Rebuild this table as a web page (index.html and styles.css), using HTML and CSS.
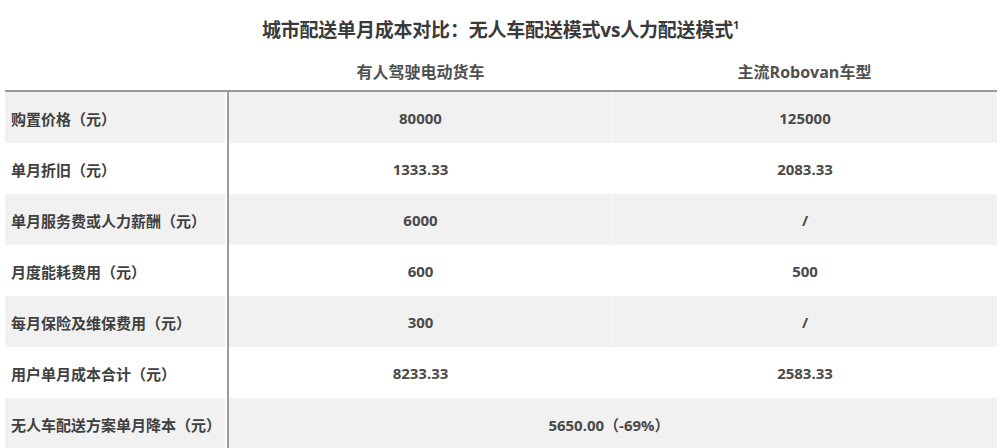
FILE: index.html
```html
<!DOCTYPE html>
<html lang="zh">
<head>
<meta charset="utf-8">
<link rel="stylesheet" href="styles.css">
</head>
<body>
<div class="page">
  <h1 class="title">城市配送单月成本对比：无人车配送模式vs人力配送模式<sup>1</sup></h1>
  <div class="table">
    <div class="head blank"></div>
    <div class="head">有人驾驶电动货车</div>
    <div class="head">主流Robovan车型</div>

    <div class="label g">购置价格（元）</div>
    <div class="cell g c2">80000</div>
    <div class="cell g c3">125000</div>

    <div class="label">单月折旧（元）</div>
    <div class="cell c2">1333.33</div>
    <div class="cell c3">2083.33</div>

    <div class="label g">单月服务费或人力薪酬（元）</div>
    <div class="cell g c2">6000</div>
    <div class="cell g c3">/</div>

    <div class="label">月度能耗费用（元）</div>
    <div class="cell c2">600</div>
    <div class="cell c3">500</div>

    <div class="label g">每月保险及维保费用（元）</div>
    <div class="cell g c2">300</div>
    <div class="cell g c3">/</div>

    <div class="label">用户单月成本合计（元）</div>
    <div class="cell c2">8233.33</div>
    <div class="cell c3">2583.33</div>

    <div class="label g">无人车配送方案单月降本（元）</div>
    <div class="cell g span">5650.00（-69%）</div>
  </div>
</div>
</body>
</html>
```
FILE: styles.css
```css
html, body {
  margin: 0;
  padding: 0;
  background: #ffffff;
}
body {
  font-family: "Open Sans", "Noto Sans CJK SC", sans-serif;
  color: #404040;
  width: 1000px;
  height: 448px;
  overflow: hidden;
}
.page {
  padding: 0 4px 0 5px;
}
.title {
  margin: 0;
  padding-top: 17px;
  height: 33px;
  font-size: 19px;
  line-height: 26px;
  font-weight: 700;
  text-align: center;
  color: #3a3a3a;
  letter-spacing: -0.2px;
}
.title sup {
  font-size: 11px;
  line-height: 0;
  vertical-align: 8px;
}
.table {
  display: grid;
  grid-template-columns: 222px 2px 383px 1px 384px;
  grid-template-rows: 42px repeat(7, 51px);
  width: 992px;
}
.head {
  font-size: 16px;
  font-weight: 700;
  color: #505050;
  text-align: center;
  line-height: 22px;
  padding-top: 11px;
  border-bottom: 2px solid #9a9a9a;
  box-sizing: border-box;
}
.head.blank {
  grid-column: 1 / 3;
}
.head:nth-child(2) {
  grid-column: 3 / 4;
}
.head:nth-child(3) {
  grid-column: 4 / 6;
}
.label {
  grid-column: 1 / 3;
  display: flex;
  align-items: center;
  padding-left: 6px;
  padding-top: 1px;
  font-size: 15px;
  font-weight: 700;
  color: #404040;
  white-space: nowrap;
  border-right: 2px solid #9c9c9c;
}
.cell {
  display: flex;
  align-items: center;
  justify-content: center;
  padding-top: 1px;
  font-size: 15px;
  font-weight: 700;
  color: #4a4a4a;
}
.c2 {
  grid-column: 3 / 4;
}
.c3 {
  grid-column: 5 / 6;
}
.span {
  grid-column: 3 / 6;
  padding-right: 8px;
}
.g {
  background: #f1f1f1;
}
.label.g {
  background: linear-gradient(to right, #f1f1f1 0, #f1f1f1 220px, transparent 220px);
}
.c2.g {
  box-shadow: 1px 0 0 #f8f8f8;
}
```
